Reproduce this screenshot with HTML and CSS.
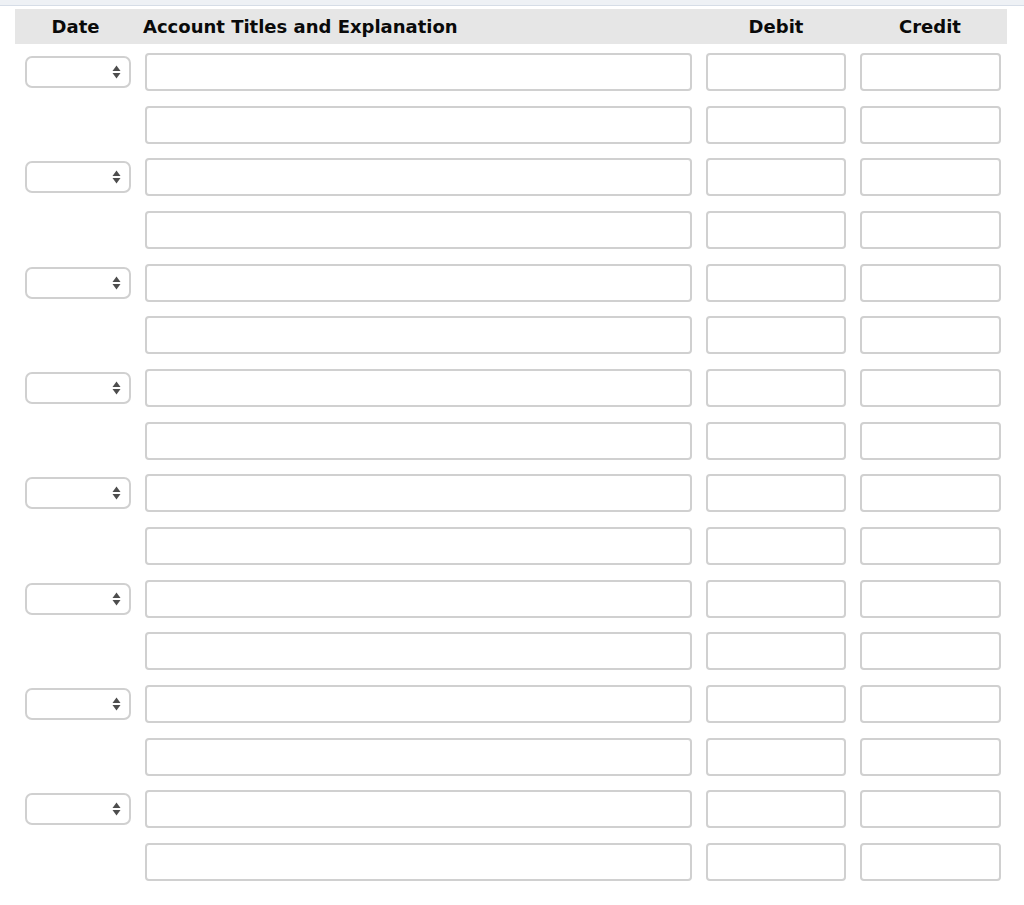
FILE: index.html
```html
<!DOCTYPE html>
<html>
<head>
<meta charset="utf-8">
<link rel="stylesheet" href="styles.css">
</head>
<body>
<div class="topbar"></div>
<div class="journal">
  <div class="head">
    <div class="h-date">Date</div>
    <div class="h-acct">Account Titles and Explanation</div>
    <div class="h-num">Debit</div>
    <div class="h-num">Credit</div>
  </div>
  <div class="rows" id="rows"></div>
</div>
<script src="script.js"></script>
</body>
</html>
```
FILE: styles.css
```css
html, body {
  margin: 0;
  padding: 0;
  background: #ffffff;
  font-family: "DejaVu Sans", Verdana, sans-serif;
}
.topbar {
  height: 5px;
  background: #eef1f5;
  border-bottom: 1px solid #d6dde7;
}
.journal {
  margin: 3px 0 0 15px;
  width: 992px;
}
.head {
  display: grid;
  grid-template-columns: 123px 561px 154px 154px;
  height: 35px;
  align-items: center;
  background: #e6e6e6;
  font-weight: bold;
  font-size: 18px;
  color: #0a0a0a;
}
.h-date { text-align: center; padding-right: 2px; }
.h-acct { padding-left: 5px; }
.h-num { text-align: center; }
.rows {
  display: grid;
  grid-template-columns: 123px 561px 154px 154px;
  grid-auto-rows: 38px;
  row-gap: 14.67px;
  padding-top: 9px;
}
.cell {
  display: flex;
  align-items: center;
  padding: 0 7px;
}
.cell.date { padding: 0 7px 0 10px; }
.cell.credit { padding: 0 6px 0 7px; }
.field {
  box-sizing: border-box;
  width: 100%;
  height: 38px;
  border: 2px solid #d0d0d0;
  border-radius: 4px;
  background: #fff;
}
.select {
  box-sizing: border-box;
  width: 106px;
  height: 32px;
  border: 2px solid #d0d0d0;
  border-radius: 7px;
  background: #fff;
  display: flex;
  align-items: center;
  justify-content: flex-end;
  padding-right: 8px;
}
.select svg { display: block; }
```
FILE: script.js
```js
var rows = document.getElementById('rows');
var arrows = '<svg width="9" height="14" viewBox="0 0 9 14"><path d="M4.5 0.5 L8.5 6 L0.5 6 Z" fill="#4d4d4d"/><path d="M0.5 8 L8.5 8 L4.5 13.5 Z" fill="#4d4d4d"/></svg>';
for (var i = 0; i < 16; i++) {
  var d = document.createElement('div');
  d.className = 'cell date';
  if (i % 2 === 0) d.innerHTML = '<div class="select">' + arrows + '</div>';
  rows.appendChild(d);
  ['acct', 'debit', 'credit'].forEach(function (c) {
    var e = document.createElement('div');
    e.className = 'cell ' + c;
    e.innerHTML = '<div class="field"></div>';
    rows.appendChild(e);
  });
}
```
